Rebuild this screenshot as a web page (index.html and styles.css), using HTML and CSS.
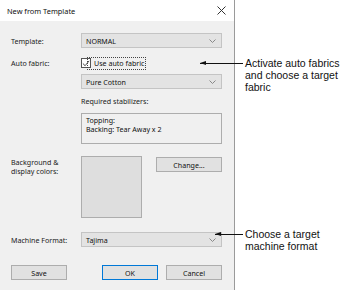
FILE: index.html
```html
<!DOCTYPE html>
<html>
<head>
<meta charset="utf-8">
<link rel="stylesheet" href="styles.css">
</head>
<body>
<div class="page">
  <div class="dialog">
    <div class="titlebar">
      <span class="title">New from Template</span>
      <svg class="close" width="9" height="9" viewBox="0 0 9 9"><path d="M0.5 0.5 L8.5 8.5 M8.5 0.5 L0.5 8.5" stroke="#333" stroke-width="1" fill="none"/></svg>
    </div>
    <div class="body">
      <div class="row r-template">
        <span class="label">Template:</span>
        <div class="combo"><span>NORMAL</span><svg class="chev" width="7" height="4" viewBox="0 0 7 4"><path d="M0.5 0.5 L3.5 3.5 L6.5 0.5" stroke="#888" fill="none"/></svg></div>
      </div>
      <div class="row r-auto">
        <span class="label">Auto fabric:</span>
        <div class="check"><span class="box"><svg width="9" height="9" viewBox="0 0 9 9"><path d="M1 4.5 L3.5 7 L8 1.5" stroke="#333" fill="none"/></svg></span><span class="focus">Use auto fabric</span></div>
      </div>
      <div class="row r-fabric">
        <span class="label"></span>
        <div class="combo"><span>Pure Cotton</span><svg class="chev" width="7" height="4" viewBox="0 0 7 4"><path d="M0.5 0.5 L3.5 3.5 L6.5 0.5" stroke="#888" fill="none"/></svg></div>
      </div>
      <div class="row r-req">
        <span class="label"></span>
        <span class="sub">Required stabilizers:</span>
      </div>
      <div class="row r-list">
        <span class="label"></span>
        <div class="listbox">Topping:<br>Backing: Tear Away x 2</div>
      </div>
      <div class="row r-colors">
        <span class="label">Background &amp;<br>display colors:</span>
        <div class="colors">
          <div class="swatch"></div>
          <div class="btn change">Change...</div>
        </div>
      </div>
      <div class="row r-machine">
        <span class="label">Machine Format:</span>
        <div class="combo"><span>Tajima</span><svg class="chev" width="7" height="4" viewBox="0 0 7 4"><path d="M0.5 0.5 L3.5 3.5 L6.5 0.5" stroke="#888" fill="none"/></svg></div>
      </div>
      <div class="buttons">
        <div class="btn save">Save</div>
        <div class="right">
          <div class="btn ok">OK</div>
          <div class="btn">Cancel</div>
        </div>
      </div>
    </div>
  </div>
  <div class="notes">
    <div class="callout c1">
      <div class="arrow a1"></div>
      <p>Activate auto fabrics<br>and choose a target<br>fabric</p>
    </div>
    <div class="callout c2">
      <div class="arrow a2"></div>
      <p>Choose a target<br>machine format</p>
    </div>
  </div>
</div>
</body>
</html>
```

FILE: styles.css
```css
html, body {
  margin: 0;
  padding: 0;
  background: #ffffff;
}
.page {
  position: relative;
  width: 352px;
  height: 298px;
  display: flex;
  font-family: "Noto Sans", sans-serif;
}
.dialog {
  width: 234px;
  height: 290px;
  border-right: 1px solid #9a9a9a;
  background: #f0f0f0;
  display: flex;
  flex-direction: column;
}
.titlebar {
  height: 21px;
  background: #ffffff;
  display: flex;
  align-items: center;
  justify-content: space-between;
  padding: 0 7px 0 7px;
}
.title {
  font-size: 7.4px;
  color: #111;
}
.close {
  margin-right: 1px;
}
.body {
  padding: 12px 12px 0 11px;
  font-size: 7.1px;
  color: #222;
}
.row {
  display: grid;
  grid-template-columns: 70px 141px;
  align-items: center;
}
.combo {
  height: 15px;
  box-sizing: border-box;
  border: 1px solid #c4c4c4;
  background: #e3e3e3;
  display: flex;
  align-items: center;
  justify-content: space-between;
  padding: 0 5px 0 4px;
  color: #111;
}
.chev {
  display: block;
}
.r-auto {
  margin-top: 8px;
  height: 14px;
}
.check {
  display: flex;
  align-items: center;
}
.box {
  border: 1px solid #555;
  background: #fff;
  display: flex;
  box-sizing: border-box;
  width: 10px;
  height: 10px;
}
.box svg {
  display: block;
}
.focus {
  border: 1px dotted #444;
  padding: 0 1px;
  line-height: 11px;
  margin-left: -4px;
  padding-left: 6px;
  color: #111;
}
.r-fabric {
  margin-top: 4px;
}
.r-req {
  margin-top: 6px;
  height: 12px;
}
.sub {
  color: #222;
}
.r-list {
  margin-top: 6px;
}
.listbox {
  height: 31px;
  box-sizing: border-box;
  border: 1px solid #adadad;
  background: #f0f0f0;
  padding: 2px 4px;
  line-height: 9px;
  color: #111;
}
.r-colors {
  margin-top: 12px;
  align-items: start;
}
.r-colors .label {
  line-height: 9px;
  padding-top: 2px;
}
.colors {
  display: flex;
  justify-content: space-between;
  align-items: flex-start;
}
.swatch {
  width: 61px;
  height: 62px;
  box-sizing: border-box;
  border: 1px solid #adadad;
  background: #dedede;
}
.btn {
  height: 15px;
  width: 56px;
  box-sizing: border-box;
  border: 1px solid #adadad;
  background: #e1e1e1;
  display: flex;
  align-items: center;
  justify-content: center;
  color: #111;
}
.change {
  width: 66px;
  margin-top: 1px;
}
.r-machine {
  margin-top: 14px;
}
.r-machine .combo {
  height: 15px;
}
.buttons {
  margin-top: 18px;
  display: flex;
  justify-content: space-between;
}
.right {
  display: flex;
  gap: 8px;
}
.ok {
  border-color: #0078d7;
}
.notes {
  flex: 1;
}
.callout {
  position: absolute;
  display: flex;
  align-items: flex-start;
}
.callout p {
  margin: 0;
  font-family: "Liberation Sans", Arial, sans-serif;
  font-size: 10.5px;
  line-height: 12px;
  color: #111;
}
.c1 {
  left: 200px;
  top: 57px;
}
.c2 {
  left: 215px;
  top: 228px;
}
.arrow {
  position: relative;
  height: 1px;
  background: #111;
  margin-top: 6px;
  margin-right: 2px;
}
.arrow::before {
  content: "";
  position: absolute;
  left: 0;
  top: -2px;
  border-right: 6px solid #111;
  border-top: 2.5px solid transparent;
  border-bottom: 2.5px solid transparent;
}
.a1 {
  width: 43px;
}
.a2 {
  width: 28px;
}
```
